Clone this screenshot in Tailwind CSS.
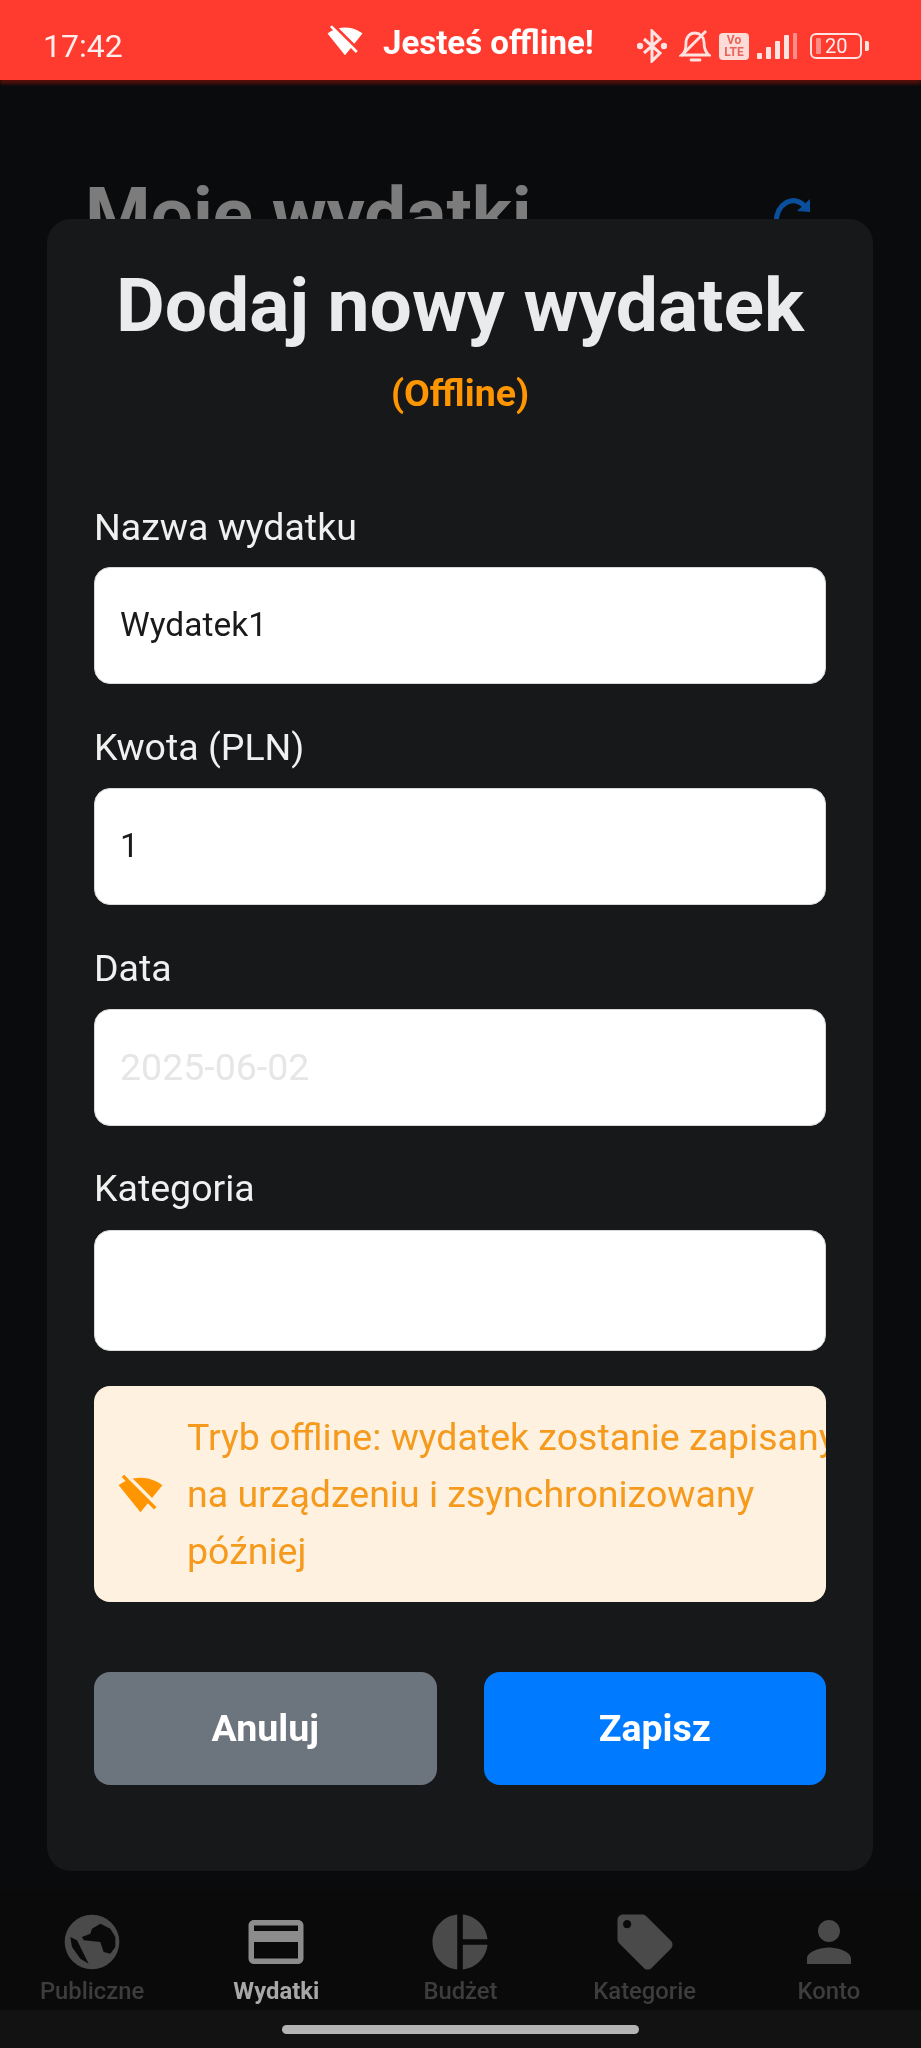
<!DOCTYPE html>
<html lang="pl">
<head>
<meta charset="utf-8">
<script src="https://cdn.jsdelivr.net/npm/@tailwindcss/browser@4"></script>
<title>Dodaj nowy wydatek</title>
</head>
<body class="m-0 bg-[#090b0d]">
<div class="relative flex h-[2048px] w-[921px] flex-col overflow-hidden bg-[#090b0d] font-['Roboto',sans-serif] blur-[0.5px]">

  <!-- status bar -->
  <header class="relative flex h-[80px] shrink-0 items-center bg-[#ff3b30] text-[#ffeeec] shadow-[0_4px_3px_rgba(90,15,10,0.9)]">
    <span class="ml-[43px] mt-[12px] w-[81px] text-[32px] leading-none">17:42</span>
    <svg class="ml-[203px] mt-[2px] h-[36px] w-[36px]" viewBox="0 0 24 24" fill="#fff"><path d="M23.64 7c-.45-.34-4.93-4-11.64-4-1.5 0-2.89.19-4.15.48L18.18 13.8 23.64 7zm-6.6 8.22L3.27 1.44 2 2.72l2.05 2.06C1.91 5.76.59 6.82.36 7l11.63 14.49.01.01.01-.01 3.9-4.86 3.32 3.32 1.27-1.27-3.46-3.46z"/></svg>
    <span class="ml-[20px] mt-[4px] w-[212px] whitespace-nowrap text-[33px] font-bold leading-none text-white">Jesteś offline!</span>
    <!-- bluetooth -->
    <svg class="ml-[42px] mt-[12px] h-[34px] w-[30px]" viewBox="0 0 30 34" fill="none" stroke="#ffe3e0" stroke-width="3"><path d="M7 10l16 14-8 8V2l8 8L7 24"/><circle cx="3" cy="17" r="3.2" fill="#ffe3e0" stroke="none"/><circle cx="27" cy="17" r="3.2" fill="#ffe3e0" stroke="none"/></svg>
    <!-- muted bell -->
    <svg class="ml-[12px] mt-[12px] h-[34px] w-[32px]" viewBox="0 0 32 34" fill="none" stroke="#ffe3e0" stroke-width="2.8"><path d="M3 26c4-3 4-8 4-12 0-6 4-10 9-10s9 4 9 9c0 6 1 10 5 13z"/><path d="M12 31h9" stroke-linecap="round"/><path d="M2 27L27 2"/></svg>
    <!-- VoLTE -->
    <div class="ml-[8px] mt-[12px] flex h-[27px] w-[30px] flex-col items-center justify-center rounded-[4px] bg-[#fddcd8] text-[12px] font-bold leading-[12px] text-[#e8645a]"><span>Vo</span><span>LTE</span></div>
    <!-- signal -->
    <div class="ml-[8px] mt-[12px] flex h-[26px] w-[40px] items-end gap-[4px]">
      <div class="h-[6px] w-[5px] rounded-[1px] bg-[#ffe3e0]"></div>
      <div class="h-[12px] w-[5px] rounded-[1px] bg-[#ffe3e0]"></div>
      <div class="h-[18px] w-[5px] rounded-[1px] bg-[#ffe3e0]"></div>
      <div class="h-[24px] w-[5px] rounded-[1px] bg-[#ffe3e0]"></div>
      <div class="h-[26px] w-[4px] rounded-[1px] bg-[#ff8f86]"></div>
    </div>
    <!-- battery -->
    <div class="ml-[13px] mt-[12px] flex items-center gap-[3px]">
      <div class="flex h-[26px] w-[52px] items-center rounded-[6px] border-2 border-[#ffe3e0] pl-[4px]">
        <div class="h-[16px] w-[5px] rounded-[1px] bg-[#ff8f86]"></div>
        <span class="ml-[4px] text-[20px] leading-none">20</span>
      </div>
      <div class="h-[10px] w-[4px] rounded-r-[2px] bg-[#ffe3e0]"></div>
    </div>
  </header>

  <!-- page behind the dialog -->
  <main class="flex flex-1 items-start justify-between pl-[85px] pr-[107px] pt-[93px]">
    <h1 class="text-[75px] font-bold leading-[82px] text-[#7c7c7c]">Moje wydatki</h1>
    <svg class="mt-[17px] h-[46px] w-[46px]" viewBox="0 0 46 46" fill="none" stroke="#0a4f9c" stroke-width="5"><path d="M8 32C9 14 24 4 37 16"/><path d="M42 9v13l-13-1z" fill="#0a4f9c" stroke="none"/></svg>
  </main>

  <!-- bottom tabs -->
  <nav class="grid h-[120px] shrink-0 grid-cols-5 bg-[#0a0a0a] pt-[19px] text-[23.8px] font-medium leading-[28px] text-[#3d3d3d]">
    <div class="flex flex-col items-center">
      <svg class="mb-[2px] h-[66px] w-[66px]" viewBox="-4 26 198 198" fill="#4a4a4a"><path fill-rule="evenodd" d="M95 43a82 82 0 1 0 0 164a82 82 0 1 0 0-164zM120 70L150 85L165 110L165 140L150 160L130 155L120 125L70 120L65 110L90 100L95 85zM30 110L50 120L85 190L60 175L35 140z"/></svg>
      <span>Publiczne</span>
    </div>
    <div class="flex flex-col items-center text-[#a8a8a8]">
      <svg class="mb-[2px] h-[66px] w-[66px]" viewBox="0 0 24 24" fill="#8c8c8c"><path d="M20 4H4c-1.11 0-1.99.89-1.99 2L2 18c0 1.11.89 2 2 2h16c1.11 0 2-.89 2-2V6c0-1.11-.89-2-2-2zm0 14H4v-6h16v6zm0-10H4V6h16v2z"/></svg>
      <span class="font-bold">Wydatki</span>
    </div>
    <div class="flex flex-col items-center">
      <svg class="mb-[2px] h-[66px] w-[66px]" viewBox="0 0 24 24" fill="#4a4a4a"><path d="M11 2v20c-5.07-.5-9-4.79-9-10s3.93-9.5 9-10zm2.03 0v8.99H22c-.47-4.74-4.24-8.52-8.97-8.99zm0 11.01V22c4.74-.47 8.5-4.25 8.97-8.99h-8.97z"/></svg>
      <span>Budżet</span>
    </div>
    <div class="flex flex-col items-center">
      <svg class="mb-[2px] h-[66px] w-[66px]" viewBox="0 0 24 24" fill="#4a4a4a"><path d="M21.41 11.58l-9-9C12.05 2.22 11.55 2 11 2H4c-1.1 0-2 .9-2 2v7c0 .55.22 1.05.59 1.42l9 9c.36.36.86.58 1.41.58.55 0 1.05-.22 1.41-.59l7-7c.37-.36.59-.86.59-1.41 0-.55-.23-1.06-.59-1.42zM5.5 7C4.67 7 4 6.33 4 5.5S4.67 4 5.5 4 7 4.67 7 5.5 6.33 7 5.5 7z"/></svg>
      <span>Kategorie</span>
    </div>
    <div class="flex flex-col items-center">
      <svg class="mb-[2px] h-[66px] w-[66px]" viewBox="0 0 24 24" fill="#4a4a4a"><path d="M12 12c2.21 0 4-1.79 4-4s-1.79-4-4-4-4 1.79-4 4 1.79 4 4 4zm0 2c-2.67 0-8 1.34-8 4v2h16v-2c0-2.66-5.33-4-8-4z"/></svg>
      <span>Konto</span>
    </div>
  </nav>

  <!-- gesture bar -->
  <div class="flex h-[38px] shrink-0 justify-center bg-[#121212] pt-[15px]">
    <div class="h-[9px] w-[357px] rounded-full bg-[#b4b4b4]"></div>
  </div>

  <!-- dialog -->
  <section class="absolute left-[47px] top-[219px] flex h-[1652px] w-[826px] flex-col rounded-[24px] bg-[#16181a] px-[47px] pt-[44px]">
    <h2 class="whitespace-nowrap text-center text-[75px] font-bold leading-[84px] text-[#e9ebed]">Dodaj nowy wydatek</h2>
    <p class="mt-[26px] text-center text-[37.5px] font-bold leading-[40px] text-[#ff9500]">(Offline)</p>

    <label class="mt-[92px] text-[37.5px] leading-[44px] text-[#f0f0f0]">Nazwa wydatku</label>
    <div class="mt-[18px] flex h-[117px] items-center rounded-[16px] border border-[#d8d8d8] bg-white px-[25px] text-[33.5px] text-[#1a1a1a]">Wydatek1</div>

    <label class="mt-[41px] text-[37.5px] leading-[44px] text-[#f0f0f0]">Kwota (PLN)</label>
    <div class="mt-[19px] flex h-[117px] items-center rounded-[16px] border border-[#d8d8d8] bg-white px-[25px] text-[33.5px] text-[#1a1a1a]">1</div>

    <label class="mt-[41px] text-[37.5px] leading-[44px] text-[#f0f0f0]">Data</label>
    <div class="mt-[19px] flex h-[117px] items-center rounded-[16px] border border-[#d8d8d8] bg-white px-[25px] text-[37.5px] text-[#e6e6e6]">2025-06-02</div>

    <label class="mt-[40px] text-[37.5px] leading-[44px] text-[#f0f0f0]">Kategoria</label>
    <div class="mt-[20px] h-[121px] rounded-[16px] border border-[#d8d8d8] bg-white"></div>

    <div class="mt-[35px] flex h-[216px] items-center gap-[24px] overflow-hidden rounded-[16px] bg-[#fff1e0] pl-[24px]">
      <svg class="h-[45px] w-[45px] shrink-0" viewBox="0 0 24 24" fill="#ff9500"><path d="M23.64 7c-.45-.34-4.93-4-11.64-4-1.5 0-2.89.19-4.15.48L18.18 13.8 23.64 7zm-6.6 8.22L3.27 1.44 2 2.72l2.05 2.06C1.91 5.76.59 6.82.36 7l11.63 14.49.01.01.01-.01 3.9-4.86 3.32 3.32 1.27-1.27-3.46-3.46z"/></svg>
      <p class="whitespace-nowrap text-[37.5px] leading-[57px] text-[#f59a1d]">Tryb offline: wydatek zostanie zapisany<br>na urządzeniu i zsynchronizowany<br>później</p>
    </div>

    <div class="mt-[70px] flex gap-[47px]">
      <button class="h-[113px] flex-1 rounded-[16px] bg-[#6c757d] text-[37.5px] font-bold text-white">Anuluj</button>
      <button class="h-[113px] flex-1 rounded-[16px] bg-[#007aff] text-[37.5px] font-bold text-white">Zapisz</button>
    </div>
  </section>
</div>
</body>
</html>
